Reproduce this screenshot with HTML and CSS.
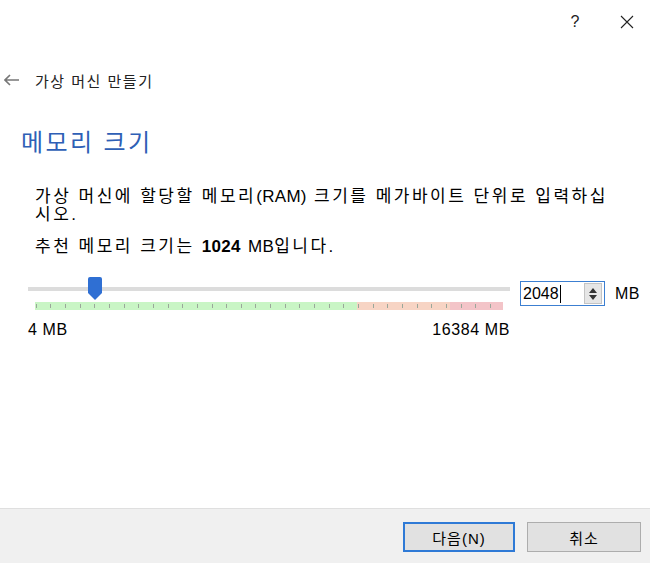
FILE: index.html
```html
<!DOCTYPE html>
<html lang="ko">
<head>
    <meta charset="UTF-8">
    <title>가상 머신 만들기</title>
    <link rel="stylesheet" href="styles.css">
</head>
<body>
    <div class="titlebar">
        <span class="title-btn">?</span>
        <span class="title-btn close">
            <svg width="14" height="14" viewBox="0 0 14 14"><path d="M1 1 L13 13 M13 1 L1 13" stroke="#222" stroke-width="1.1"/></svg>
        </span>
    </div>

    <div class="nav">
        <svg class="back" width="16" height="12" viewBox="0 0 16 12"><path d="M1 6 H15 M6 1 L1 6 L6 11" fill="none" stroke="#777" stroke-width="1.6"/></svg>
        <span class="nav-title">가상 머신 만들기</span>
    </div>

    <main class="page">
        <h2 class="page-title">메모리 크기</h2>

        <div class="content">
            <p class="desc">가상 머신에 할당할 메모리<span class="en">(RAM)</span> 크기를 메가바이트 단위로 입력하십<br>시오.</p>
            <p class="recommend">추천 메모리 크기는 <b class="en">1024</b> <span class="en">MB</span>입니다.</p>
        </div>

        <div class="memory-row">
            <div class="slider">
                <div class="track"></div>
                <div class="handle">
                    <svg width="14" height="24" viewBox="0 0 14 24"><path d="M2 0 H12 Q14 0 14 2 V16 L7 23 L0 16 V2 Q0 0 2 0 Z" fill="#2f6fd3"/></svg>
                </div>
                <div class="ticks"></div>
                <div class="scale">
                    <span>4 MB</span>
                    <span>16384 MB</span>
                </div>
            </div>
            <div class="spinbox">
                <span class="spin-value">2048<i class="caret"></i></span>
                <span class="spin-btn">
                    <svg width="10" height="14" viewBox="0 0 10 14"><path d="M1 6 L5 1 L9 6 Z M1 8 L5 13 L9 8 Z" fill="#333"/></svg>
                </span>
            </div>
            <span class="unit">MB</span>
        </div>
    </main>

    <div class="footer">
        <button class="btn default">다음(N)</button>
        <button class="btn">취소</button>
    </div>
</body>
</html>
```

FILE: styles.css
```css
html, body {
    height: 100%;
}

body {
    margin: 0;
    display: flex;
    flex-direction: column;
    background: #fff;
    color: #000;
    font-family: "Liberation Sans", "Noto Sans CJK KR", sans-serif;
    font-size: 17px;
}

.titlebar {
    display: flex;
    justify-content: flex-end;
    align-items: center;
    height: 44px;
}

.title-btn {
    display: flex;
    align-items: center;
    justify-content: center;
    width: 46px;
    height: 36px;
    font-size: 16px;
    color: #222;
}

.title-btn.close {
    margin-left: 6px;
}

.nav {
    display: flex;
    align-items: center;
    gap: 15px;
    height: 40px;
    margin-top: 16px;
    padding-left: 4px;
}

.nav-title {
    font-size: 15px;
    letter-spacing: 1.5px;
    color: #222;
}

.page {
    flex: 1;
    padding: 0 0 0 21px;
}

.page-title {
    margin: 28px 0 0;
    font-size: 24px;
    font-weight: normal;
    letter-spacing: 2.4px;
    color: #2e5fb6;
    line-height: 30px;
}

.content {
    padding-left: 14px;
    margin-top: 30px;
    letter-spacing: 2.5px;
}

.content .en {
    letter-spacing: 0.3px;
}

.desc {
    margin: 0;
    line-height: 18px;
}

.recommend {
    margin: 14px 0 0;
    line-height: 18px;
}

.memory-row {
    display: flex;
    align-items: flex-start;
    margin-top: 19px;
    padding-left: 7px;
}

.slider {
    position: relative;
    width: 482px;
    padding-top: 12px;
}

.track {
    height: 4px;
    background: #dcdcdc;
}

.handle {
    position: absolute;
    left: 60px;
    top: 2px;
}

.ticks {
    height: 8px;
    margin: 11px 7px 0;
    background:
        repeating-linear-gradient(to right, transparent 0, transparent 0.7px, #9aa79a 0.7px, #9aa79a 1.7px, transparent 1.7px, transparent 14.65px) 0 2px / 100% 4px no-repeat,
        linear-gradient(to right, #c9f5c5 0, #c9f5c5 322px, #f7d4c4 322px, #f7d4c4 415px, #f3c4c8 415px);
}

.scale {
    display: flex;
    justify-content: space-between;
    margin-top: 11px;
    line-height: 18px;
    font-size: 16px;
    letter-spacing: 0.6px;
}

.spinbox {
    display: flex;
    align-items: center;
    justify-content: space-between;
    width: 79px;
    height: 23px;
    margin-left: 10px;
    margin-top: 6px;
    border: 1px solid #3c7fd1;
    padding: 0 2px 0 2px;
    font-size: 16px;
}

.spin-value {
    display: flex;
    align-items: center;
}

.caret {
    display: inline-block;
    width: 1px;
    height: 18px;
    margin-left: 1px;
    background: #000;
}

.spin-btn {
    display: flex;
    align-items: center;
    justify-content: center;
    width: 16px;
    height: 19px;
    background: #e6e6e6;
    border: 1px solid #c4c4c4;
}

.unit {
    margin-left: 10px;
    margin-top: 10px;
    line-height: 18px;
    font-size: 16px;
    letter-spacing: 0.5px;
}

.footer {
    display: flex;
    justify-content: flex-end;
    gap: 12px;
    height: 55px;
    padding: 13px 9px 0 0;
    box-sizing: border-box;
    background: #f0f0f0;
    border-top: 1px solid #dfdfdf;
}

.btn {
    width: 114px;
    height: 30px;
    background: #e1e1e1;
    border: 1px solid #adadad;
    font-family: "Liberation Sans", "Noto Sans CJK KR", sans-serif;
    font-size: 15px;
    letter-spacing: 1px;
    color: #000;
}

.btn.default {
    width: 112px;
    border: 2px solid #2f7ad6;
}
```
